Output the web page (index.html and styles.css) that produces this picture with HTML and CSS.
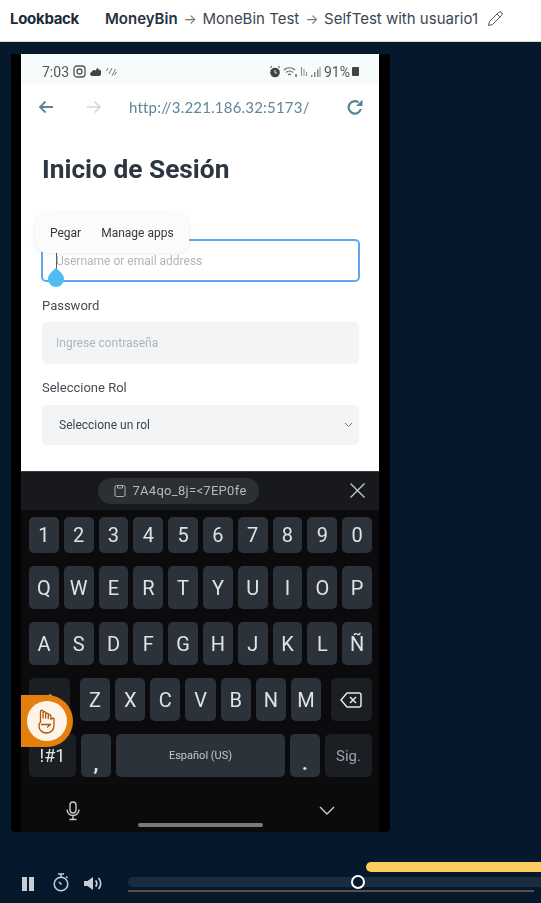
FILE: index.html
```html
<!DOCTYPE html>
<html lang="en">
<head>
  <meta charset="UTF-8" />
  <title>Lookback - SelfTest with usuario1</title>
  <link rel="stylesheet" href="styles.css">
</head>
<body>

<header class="topbar">
  <span class="logo">Lookback</span>
  <nav class="crumbs">
    <b>MoneyBin</b>
    <span class="arrow">→</span>
    <span>MoneBin Test</span>
    <span class="arrow">→</span>
    <span>SelfTest with usuario1</span>
    <svg class="pencil" width="16" height="16" viewBox="0 0 16 16" fill="none" stroke="#555" stroke-width="1">
      <path d="M1.500 14.500l1-4L11.500 1.500a1.800 1.800 0 0 1 3 3L5.500 13.500z"/>
      <path d="M10 3l3 3"/>
    </svg>
  </nav>
</header>

<main class="stage">
  <div class="phone">
    <div class="screen">
      <div class="statusbar">
        <span class="status-left">
          <span>7:03</span>
          <svg width="13" height="13" viewBox="0 0 13 13" fill="none" stroke="#555" stroke-width="1.300"><rect x="1" y="1" width="11" height="11" rx="3"/><circle cx="6.500" cy="6.500" r="2.500"/></svg>
          <svg width="12" height="9" viewBox="0 0 12 9" fill="#444"><path d="M2 9a2 2 0 0 1-.5-3.900A3 3 0 0 1 6 3.500 2.500 2.500 0 0 1 8 1c0 1 1 2 3 2.500V7a2 2 0 0 1-2 2z"/></svg>
          <svg width="11" height="10" viewBox="0 0 11 10" fill="none" stroke="#777" stroke-width="1"><path d="M2 1L0.500 4M6 1L3 7M9.500 2L6 9M10.500 5L8.500 8"/></svg>
        </span>
        <span class="status-right">
          <svg width="12" height="12" viewBox="0 0 12 12" fill="#444"><circle cx="6" cy="6.500" r="4.800"/><path d="M1 1.500l2 -1 M9 .5l2 1" stroke="#444"/><path d="M6 4v3h2" stroke="#ddd" fill="none"/></svg>
          <svg width="15" height="12" viewBox="0 0 15 12" fill="none" stroke="#666" stroke-width="1.100"><path d="M1 4a8 8 0 0 1 11 0M3 6.500a5 5 0 0 1 7 0M5 8.800a2 2 0 0 1 3 0"/><path d="M13 8v3" stroke-width="1.500"/></svg>
          <svg width="8" height="11" viewBox="0 0 8 11" fill="none" stroke="#888"><path d="M1.500 1v9M4 3v7M6.500 6v4"/></svg>
          <svg width="11" height="10" viewBox="0 0 11 10" fill="#888"><path d="M1 8h1.500v2H1zM4 5h1.500v5H4zM7 2.500h1.500V10H7zM9.500 0h1v10h-1z"/></svg>
          <span class="battery-text">91%</span>
          <span class="battery"></span>
        </span>
      </div>

      <div class="browserbar">
        <svg width="16" height="14" viewBox="0 0 16 14" fill="none" stroke="#5b8296" stroke-width="1.800"><path d="M15 7H2M7.500 1.500L2 7l5.500 5.500"/></svg>
        <svg class="forward" width="16" height="14" viewBox="0 0 16 14" fill="none" stroke="#ccd9e0" stroke-width="1.500"><path d="M1 7h13M8.500 1.500L14 7l-5.500 5.500"/></svg>
        <span class="url">http://3.221.186.32:5173/</span>
        <svg class="reload" width="16" height="16" viewBox="0 0 16 16" fill="none" stroke="#5b8296" stroke-width="2.200"><path d="M13.800 10A6.200 6.200 0 1 1 11.500 3.400"/><path d="M15.500 .5v6.500H9z" fill="#5b8296" stroke="none"/></svg>
      </div>

      <form class="login">
        <h1>Inicio de Sesión</h1>
        <div class="input focused">
          <span class="caret"></span>
          <span class="placeholder">Username or email address</span>
        </div>
        <label>Password</label>
        <div class="input filled"><span class="placeholder">Ingrese contraseña</span></div>
        <label class="role-label">Seleccione Rol</label>
        <div class="input filled select">
          <span>Seleccione un rol</span>
          <svg width="9" height="6" viewBox="0 0 9 6" fill="none" stroke="#777"><path d="M1 1l3.500 3.500L8 1"/></svg>
        </div>
      </form>

      <div class="paste-menu"><span>Pegar</span><span>Manage apps</span></div>
      <span class="handle"></span>

      <div class="keyboard">
        <div class="clipbar">
          <span class="clip">
            <svg width="12" height="13" viewBox="0 0 12 13" fill="none" stroke="#a9adb2"><rect x="1" y="1.500" width="10" height="11" rx="1.500"/><path d="M3.500 1.500v2.500h5V1.500"/></svg>
            7A4qo_8j=&lt;7EP0fe
          </span>
          <svg class="clip-close" width="15" height="15" viewBox="0 0 15 15" stroke="#c4c7ca" stroke-width="1.400"><path d="M.5.5l14 14M14.500.5l-14 14"/></svg>
        </div>
        <div class="keys">
          <div class="row row-num"><span class="key">1</span><span class="key">2</span><span class="key">3</span><span class="key">4</span><span class="key">5</span><span class="key">6</span><span class="key">7</span><span class="key">8</span><span class="key">9</span><span class="key">0</span></div>
          <div class="row"><span class="key">Q</span><span class="key">W</span><span class="key">E</span><span class="key">R</span><span class="key">T</span><span class="key">Y</span><span class="key">U</span><span class="key">I</span><span class="key">O</span><span class="key">P</span></div>
          <div class="row"><span class="key">A</span><span class="key">S</span><span class="key">D</span><span class="key">F</span><span class="key">G</span><span class="key">H</span><span class="key">J</span><span class="key">K</span><span class="key">L</span><span class="key">Ñ</span></div>
          <div class="row">
            <span class="key dark wide shift"><svg width="14" height="12" viewBox="0 0 14 12" fill="none" stroke="#dfe3e6" stroke-width="1.400"><path d="M7 1L1.500 6.500H4V11h6V6.500h2.500z"/></svg></span>
            <span class="key">Z</span><span class="key">X</span><span class="key">C</span><span class="key">V</span><span class="key">B</span><span class="key">N</span><span class="key">M</span>
            <span class="key dark wide back"><svg width="22" height="16" viewBox="0 0 22 16" fill="none" stroke="#e4e6e8" stroke-width="1.500"><path d="M7 1h12a2 2 0 0 1 2 2v10a2 2 0 0 1-2 2H7L1 8z"/><path d="M10 5l6 6M16 5l-6 6"/></svg></span>
          </div>
          <div class="row row-bottom">
            <span class="key dark symbols">!#1</span>
            <span class="key comma">,</span>
            <span class="key space">Español (US)</span>
            <span class="key period">.</span>
            <span class="key dark next">Sig.</span>
          </div>
        </div>
        <div class="kb-nav">
          <svg width="14" height="20" viewBox="0 0 14 20" fill="none" stroke="#c9cbcd" stroke-width="1.400"><rect x="4" y="1" width="6" height="11" rx="3"/><path d="M1 8.500a6 6 0 0 0 12 0M7 15v3M3.500 18.500h7"/></svg>
          <svg width="16" height="9" viewBox="0 0 16 9" fill="none" stroke="#c9cbcd" stroke-width="1.400"><path d="M1 1l7 7 7-7"/></svg>
        </div>
        <div class="homebar"></div>
      </div>

      <div class="hand-badge">
        <span class="hand-circle">
          <svg width="20" height="26" viewBox="0 0 20 26" fill="none" stroke="#a9580f" stroke-width="1.300" stroke-linecap="round" stroke-linejoin="round">
            <path d="M3.500 14V3.500a1.300 1.300 0 0 1 2.600 0V10M6.100 10V5a1.300 1.300 0 0 1 2.600 0v5M8.700 10V6.500a1.300 1.300 0 0 1 2.600 0V10.500M11.300 10.500V8a1.300 1.300 0 0 1 2.600 0v3"/>
            <path d="M3.500 14C2.500 15 2 16 2 18c0 4 3 7 7.500 7s7.500-3 7.500-8.500V10.500c-1-.5-2.300 0-3.100.5"/>
            <path d="M4.500 16.500h9l-3 2.500"/>
          </svg>
        </span>
      </div>
    </div>
  </div>
</main>

<footer class="player">
  <div class="controls">
    <svg width="12" height="14" viewBox="0 0 12 14" fill="#c9ced3"><path d="M0 0h5v14H0zM7 0h5v14H7z"/></svg>
    <svg class="timer" width="16" height="19" viewBox="0 0 16 19" fill="none" stroke="#c9ced3" stroke-width="1.500"><circle cx="8" cy="11" r="6.800"/><path d="M5 1h6M8 1v3M13 3.500l1.500 1.500M6 9l2.500 2.500"/></svg>
    <svg width="19" height="15" viewBox="0 0 19 15" fill="#c9ced3"><path d="M0 5h3.500L9 1v13L3.500 10H0z"/><path d="M11.500 4.500a4 4 0 0 1 0 6M14.500 2a8 8 0 0 1 0 11" fill="none" stroke="#c9ced3" stroke-width="1.700"/></svg>
  </div>
  <div class="timeline">
    <div class="track"></div>
    <div class="buffer"></div>
    <span class="note-bar"></span>
    <span class="thumb"></span>
  </div>
</footer>

</body>
</html>
```

FILE: styles.css
```css
* {
  box-sizing: border-box;
}
body {
  margin: 0;
  width: 541px;
  height: 903px;
  overflow: hidden;
  background: #06182b;
  font-family: "Inter", sans-serif;
}

/* top bar */
.topbar {
  height: 42px;
  background: white;
  border-bottom: 1px solid #d9dadb;
  display: flex;
  align-items: center;
  padding: 0 10px 4px;
  color: #3c4650;
  font-size: 15px;
}
.logo {
  font-weight: 700;
  font-size: 15px;
  letter-spacing: -0.3px;
  color: #1c2b3a;
  width: 95px;
}
.crumbs {
  display: flex;
  align-items: center;
  gap: 6px;
}
.crumbs b {
  font-weight: 600;
  color: #253240;
}
.arrow {
  color: #777;
  font-size: 14px;
  margin-right: -0.5px;
}
.pencil {
  margin-left: 3px;
}

/* phone video */
.stage {
  padding: 12px 11px 0;
  height: 790px;
}
.phone {
  width: 379px;
  height: 778px;
  background: black;
  border-radius: 0 0 4px 4px;
  padding-left: 10px;
  filter: blur(0.4px);
}
.screen {
  position: relative;
  width: 358px;
  height: 778px;
  background: white;
  font-family: "Roboto", sans-serif;
}
.statusbar {
  height: 30px;
  background: #f6fbfc;
  display: flex;
  justify-content: space-between;
  align-items: center;
  padding: 9px 20px 4px 21px;
  color: #555;
  font-size: 14px;
}
.status-left,
.status-right {
  display: flex;
  align-items: center;
  gap: 4px;
}
.status-right {
  gap: 2px;
}
.battery-text {
  margin-left: 1px;
}
.battery {
  width: 7px;
  height: 9px;
  background: #444;
  border-radius: 1px;
}
.browserbar {
  height: 46px;
  display: flex;
  align-items: center;
  padding: 0 16px 0 17px;
}
.forward {
  margin-left: 32px;
}
.url {
  margin-left: 27px;
  font-family: "Lato", sans-serif;
  font-size: 15px;
  color: #5f8699;
  letter-spacing: 0.2px;
}
.reload {
  margin-left: auto;
}

/* login form */
.login {
  padding: 0 20px 0 21px;
}
.login h1 {
  margin: 23px 0 0;
  font-size: 26.3px;
  line-height: 32px;
  font-weight: 700;
  color: #2b3640;
}
.login label {
  display: block;
  font-size: 13px;
  line-height: 16px;
  color: #444c55;
  margin: 16px 0 8px;
}
.login .role-label {
  margin-bottom: 9px;
}
.input {
  height: 42px;
  border-radius: 5px;
  display: flex;
  align-items: center;
  font-size: 12px;
  padding: 0 14px;
}
.focused {
  margin: 54px -1px 0;
  height: 43px;
  border: 2px solid #5fa8ec;
  padding-left: 13px;
}
.filled {
  background: #f3f4f6;
}
.placeholder {
  color: #b0b5bb;
}
.caret {
  width: 1px;
  height: 16px;
  margin-right: -1px;
  background: #555;
}
.select {
  height: 40px;
  padding: 0 6px 0 17px;
  justify-content: space-between;
  color: #3c444c;
}
.paste-menu {
  position: absolute;
  left: 14px;
  top: 158px;
  width: 154px;
  height: 41px;
  background: #fbfbfc;
  border-radius: 12px;
  box-shadow: 0 1px 4px rgba(0, 0, 0, 0.08);
  display: flex;
  align-items: center;
  gap: 20px;
  padding-left: 15px;
  font-size: 12px;
  color: #33383d;
}
.handle {
  position: absolute;
  left: 27px;
  top: 217px;
  width: 16px;
  height: 16px;
  background: #4fbdf2;
  border-radius: 50% 0 50% 50%;
  transform: rotate(-45deg);
}

/* keyboard */
.keyboard {
  position: absolute;
  left: 0;
  right: 0;
  bottom: 0;
  height: 361px;
  background: #0b0b0d;
  color: #dfe3e6;
}
.clipbar {
  height: 39px;
  background: #17191d;
  border-top: 1px solid #3a3c40;
  display: flex;
  align-items: center;
  padding-left: 77px;
  position: relative;
}
.clip {
  height: 26px;
  margin-top: -1px;
  width: 161px;
  padding-left: 4px;
  background: #2c3035;
  border-radius: 13px;
  display: flex;
  align-items: center;
  justify-content: center;
  gap: 6px;
  font-size: 13px;
  color: #b4b8bc;
  letter-spacing: 0.3px;
}
.clip-close {
  position: absolute;
  right: 14px;
  top: 11px;
}
.keys {
  padding: 7px 7px 0 8px;
  display: flex;
  flex-direction: column;
  gap: 13px;
}
.row {
  display: flex;
  gap: 5px;
  height: 43px;
}
.row-num {
  height: 36px;
}
.key {
  flex: 1;
  background: #2b323a;
  border-radius: 5px;
  display: flex;
  align-items: center;
  justify-content: center;
  font-size: 20px;
}
.dark {
  background: #1b1e23;
}
.wide {
  flex: 0 0 41px;
}
.shift {
  margin-right: 5px;
}
.back {
  margin-left: 5px;
}
.symbols {
  flex: 0 0 47px;
  font-size: 18px;
}
.comma,
.period {
  flex: 0 0 30px;
  padding-top: 14px;
  font-weight: 700;
}
.space {
  flex: 0 0 169px;
  font-size: 11px;
  color: #c4c9cd;
}
.next {
  flex: 0 0 47px;
  font-size: 15px;
  color: #98a4ae;
}
.kb-nav {
  height: 46px;
  display: flex;
  justify-content: space-between;
  align-items: center;
  padding: 21px 44px 0 45px;
}
.homebar {
  width: 125px;
  height: 4px;
  margin: 0 auto;
  background: #7b7b7b;
  border-radius: 2px;
}
.hand-badge {
  position: absolute;
  left: 0;
  top: 641px;
  width: 52px;
  height: 52px;
  background: #e57f0b;
  border-radius: 0 26px 26px 0;
  display: flex;
  align-items: center;
  padding-left: 6px;
}
.hand-circle {
  width: 40px;
  height: 40px;
  border-radius: 50%;
  background: #fdf3e6;
  display: flex;
  align-items: center;
  justify-content: center;
}

/* player */
.player {
  height: 71px;
  display: flex;
  align-items: flex-start;
}
.controls {
  width: 128px;
  padding: 43px 0 0 22px;
  display: flex;
  align-items: center;
  gap: 15px;
}
.timer {
  margin: -2px 0 0 4px;
}
.timeline {
  position: relative;
  flex: 1;
  padding-top: 45px;
}
.track {
  height: 10px;
  background: #1a2d40;
  border-radius: 5px 0 0 5px;
}
.buffer {
  height: 2px;
  margin: 3px 7px 0 0;
  background: #5b5048;
}
.note-bar {
  position: absolute;
  left: 238px;
  right: 0;
  top: 30px;
  height: 10px;
  background: #fdcb5e;
  border-radius: 5px 0 0 5px;
}
.thumb {
  position: absolute;
  left: 223px;
  top: 43px;
  width: 14px;
  height: 14px;
  border: 2.500px solid white;
  border-radius: 50%;
  background: #06182b;
}
```
